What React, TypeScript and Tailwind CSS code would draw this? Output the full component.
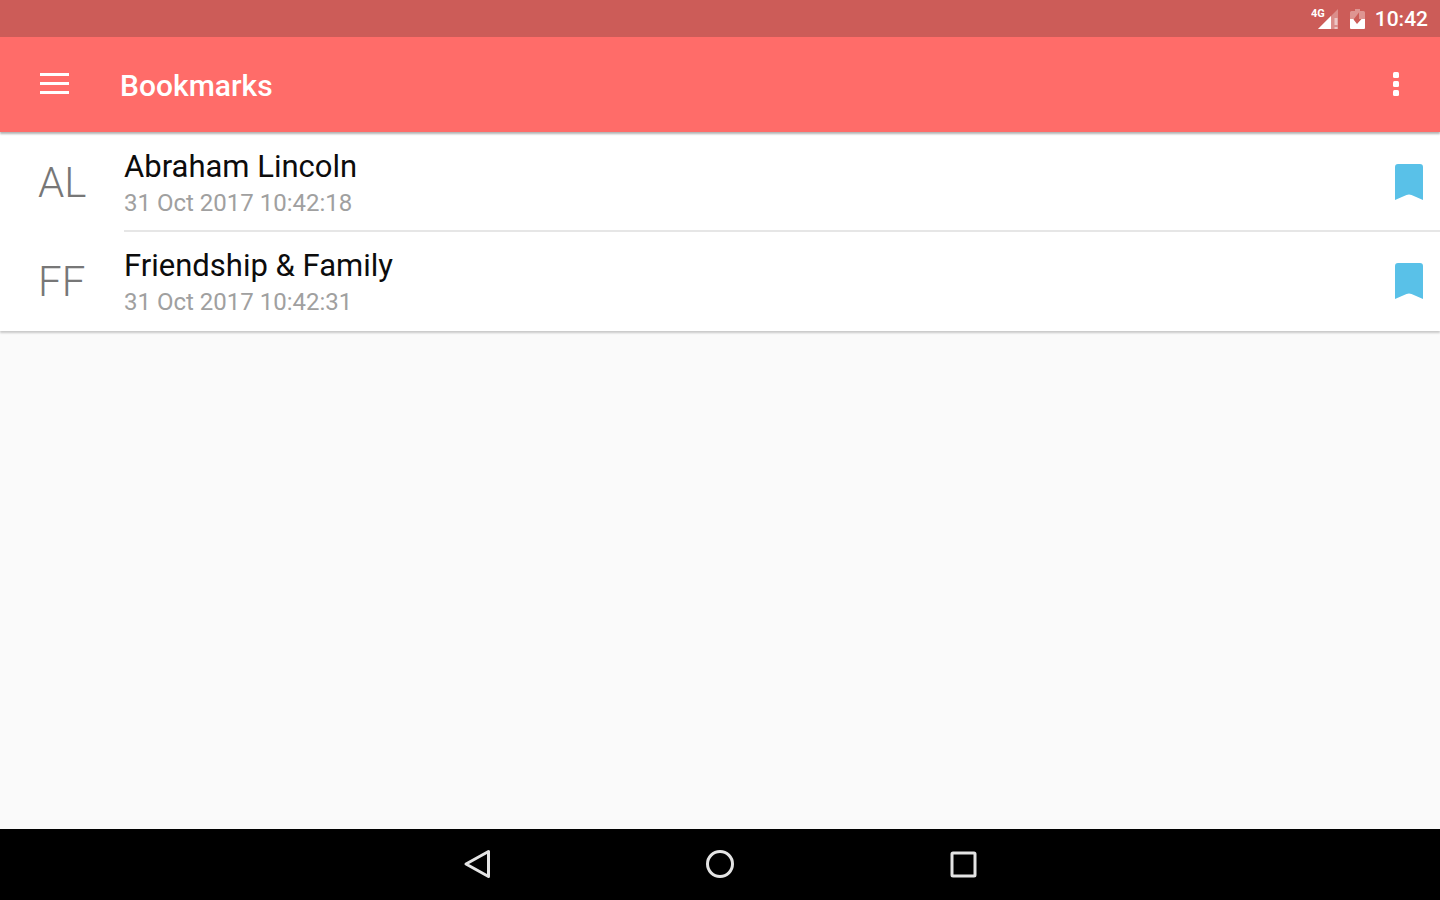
import { useState } from 'react'

type Bookmark = {
  initials: string
  title: string
  date: string
}

const bookmarks: Bookmark[] = [
  { initials: 'AL', title: 'Abraham Lincoln', date: '31 Oct 2017 10:42:18' },
  { initials: 'FF', title: 'Friendship & Family', date: '31 Oct 2017 10:42:31' },
]

function StatusBar() {
  return (
    <div className="flex h-[37px] flex-shrink-0 items-center justify-end bg-[#cc5c58] pr-3 text-white">
      <svg width="28" height="22" viewBox="0 0 28 22" aria-label="Mobile signal" className="mr-[11px]">
        <text x="0" y="9" fontSize="11" fontWeight="700" fill="#fff">4G</text>
        <path d="M27 1v20H7z" fill="#fff" fillOpacity="0.3" />
        <path d="M20 8v13H7z" fill="#fff" />
        <path d="M25 10v7M25 19v2" stroke="#fff" strokeOpacity="0.5" strokeWidth="3" />
      </svg>
      {/* Battery, charging */}
      <svg width="15" height="22" viewBox="0 0 15 22" aria-label="Battery charging" className="mr-2.5">
        <path d="M5 1h5v2h3.500q1.500 0 1.500 1.500V12H0V4.500Q0 3 1.500 3H5z" fill="#fff" fillOpacity="0.35" />
        <path d="M0 11h15v9q0 1-1 1H1q-1 0-1-1z" fill="#fff" />
        <path d="M9 4.500 3.500 11.500l3.500 4.500 4.500-5H9z" fill="#cc5c58" />
      </svg>
      <span className="text-[21px] leading-6 font-medium">10:42</span>
    </div>
  )
}

function Toolbar() {
  return (
    <header className="z-10 flex h-[95px] flex-shrink-0 items-center bg-[#ff6c69] pr-10 pl-10 text-white shadow-[0_2px_2px_rgba(0,0,0,0.3)]">
      <button type="button" aria-label="Open menu" className="mr-[51px]">
        <svg width="29" height="23" viewBox="0 0 29 23" className="block" fill="#fff">
          <path d="M0 0h29v3H0zM0 9h29v3H0zM0 18h29v3H0z" />
        </svg>
      </button>
      <h1 className="flex-1 pt-0.5 text-[30px] leading-8 font-medium">Bookmarks</h1>
      <button type="button" aria-label="More options">
        <svg width="8" height="25" viewBox="0 0 8 25" className="block" fill="#fff">
          <rect x="1" y="0" width="6" height="6" rx="1.5" />
          <rect x="1" y="9" width="6" height="6" rx="1.5" />
          <rect x="1" y="18" width="6" height="6" rx="1.5" />
        </svg>
      </button>
    </header>
  )
}

function BookmarkRow({ bookmark }: { bookmark: Bookmark }) {
  const [saved, setSaved] = useState(true)

  return (
    <li className="group flex h-[99px] pl-[38px]">
      <span className="flex w-[86px] items-center text-[42px] leading-[50px] font-light text-[#777]">
        {bookmark.initials}
      </span>
      <div className="flex flex-1 items-center border-b-2 border-[#e6e6e6] pr-4 group-last:border-transparent">
        <div className="flex-1 pt-1.5">
          <div className="text-[31px] leading-9 text-[#0c0c0c]">{bookmark.title}</div>
          <div className="text-[24px] leading-9 text-[#a0a0a0]">{bookmark.date}</div>
        </div>
        <button
          type="button"
          aria-label={`Bookmark ${bookmark.title}`}
          aria-pressed={saved}
          onClick={() => setSaved(!saved)}
        >
          <svg width="30" height="38" viewBox="0 0 30 38" className="block" fill={saved ? '#59c1e8' : '#ccc'}>
            <path d="M4 1h22q3 0 3 3v33l-11.500-5q-2.500-1-5 0L1 37V4q0-3 3-3z" />
          </svg>
        </button>
      </div>
    </li>
  )
}

function NavigationBar() {
  return (
    <nav className="flex h-[71px] flex-shrink-0 items-center justify-center bg-black pb-px">
      <button type="button" aria-label="Back" className="flex w-[243px] justify-center">
        <svg width="30" height="30" viewBox="0 0 30 30" fill="none" stroke="#e4e4e4" strokeWidth="3">
          <path d="M26.500 2.500v25L4 15z" strokeLinejoin="round" />
        </svg>
      </button>
      <button type="button" aria-label="Home" className="flex w-[243px] justify-center">
        <svg width="30" height="30" viewBox="0 0 30 30" fill="none" stroke="#e4e4e4" strokeWidth="3">
          <circle cx="15" cy="15" r="12.5" />
        </svg>
      </button>
      <button type="button" aria-label="Recent apps" className="flex w-[243px] justify-center">
        <svg width="30" height="30" viewBox="0 0 30 30" fill="none" stroke="#e4e4e4" strokeWidth="3">
          <rect x="4" y="4" width="23" height="23" rx="1" />
        </svg>
      </button>
    </nav>
  )
}

export default function App() {
  return (
    <div className="flex h-screen flex-col overflow-hidden bg-[#fafafa] font-[Roboto,sans-serif]">
      <StatusBar />
      <Toolbar />
      <main className="flex-1 overflow-y-auto">
        <ul className="bg-white pt-px shadow-[0_2px_2px_rgba(0,0,0,0.2)]">
          {bookmarks.map((b) => (
            <BookmarkRow key={b.initials} bookmark={b} />
          ))}
        </ul>
      </main>
      <NavigationBar />
    </div>
  )
}
